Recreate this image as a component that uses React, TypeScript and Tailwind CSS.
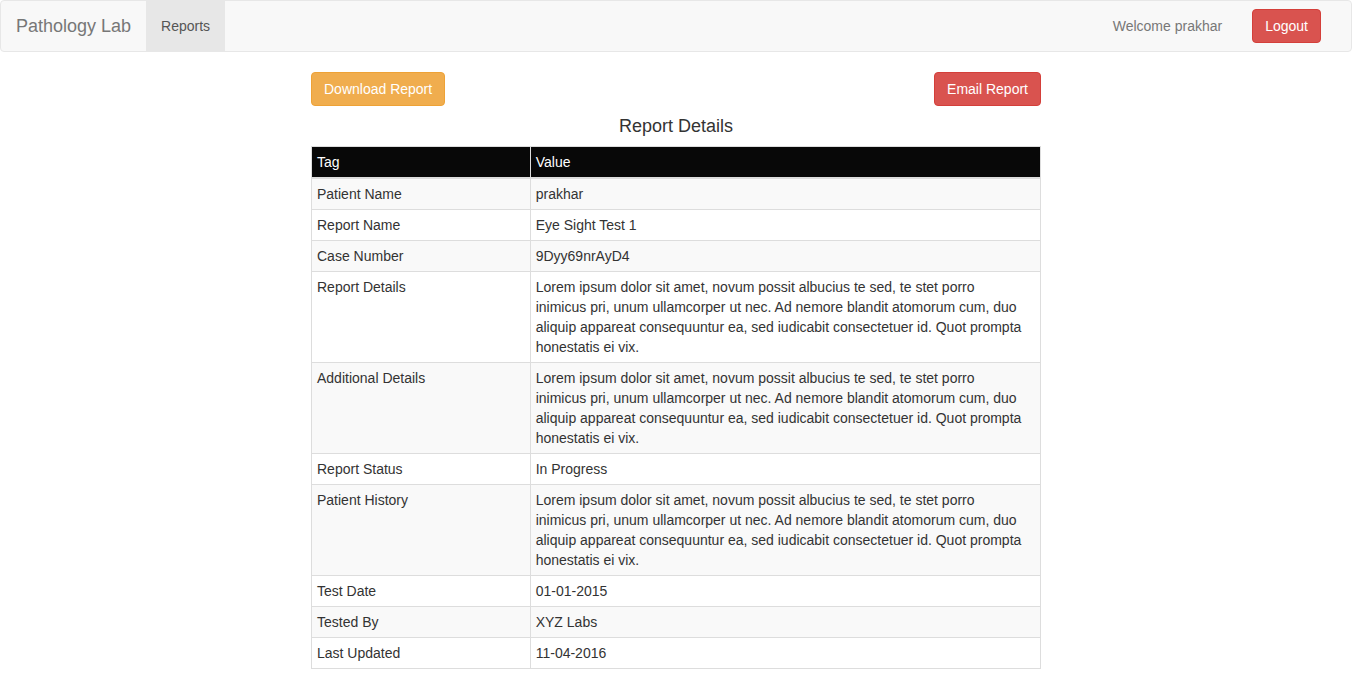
const lorem =
  'Lorem ipsum dolor sit amet, novum possit albucius te sed, te stet porro inimicus pri, unum ullamcorper ut nec. Ad nemore blandit atomorum cum, duo aliquip appareat consequuntur ea, sed iudicabit consectetuer id. Quot prompta honestatis ei vix.';

const rows: [string, string][] = [
  ['Patient Name', 'prakhar'],
  ['Report Name', 'Eye Sight Test 1'],
  ['Case Number', '9Dyy69nrAyD4'],
  ['Report Details', lorem],
  ['Additional Details', lorem],
  ['Report Status', 'In Progress'],
  ['Patient History', lorem],
  ['Test Date', '01-01-2015'],
  ['Tested By', 'XYZ Labs'],
  ['Last Updated', '11-04-2016'],
];

function Navbar() {
  return (
    <nav className="flex items-center justify-between rounded border border-[#e7e7e7] bg-[#f8f8f8]">
      <div className="flex items-center">
        <a href="#" className="px-[15px] py-[15px] text-lg leading-5 text-[#777777]">
          Pathology Lab
        </a>
        <a href="#reports" className="bg-[#e7e7e7] px-[15px] py-[15px] text-[#555555]">
          Reports
        </a>
      </div>
      <div className="flex items-center gap-[30px] pr-[30px]">
        <p className="text-[#777777]">Welcome prakhar</p>
        <button
          type="button"
          className="rounded border border-[#d43f3a] bg-[#d9534f] px-3 py-1.5 text-white"
        >
          Logout
        </button>
      </div>
    </nav>
  );
}

function ReportTable() {
  return (
    <table className="w-full border-collapse border border-[#dddddd]">
      <thead>
        <tr className="bg-[#080808] text-left text-white">
          <th className="w-[30%] border border-b-2 border-[#dddddd] p-[5px] font-normal">Tag</th>
          <th className="border border-b-2 border-[#dddddd] p-[5px] font-normal">Value</th>
        </tr>
      </thead>
      <tbody>
        {rows.map(([tag, value]) => (
          <tr key={tag} className="align-top odd:bg-[#f9f9f9]">
            <td className="border border-[#dddddd] p-[5px]">{tag}</td>
            <td className="border border-[#dddddd] py-[5px] pr-3.5 pl-[5px]">{value}</td>
          </tr>
        ))}
      </tbody>
    </table>
  );
}

export default function App() {
  return (
    <div className="bg-white font-['Liberation_Sans',Arial,sans-serif] text-sm leading-5 text-[#333333]">
      <Navbar />
      <main className="mx-auto mt-5 max-w-[730px] pb-5">
        <div className="flex justify-between">
          <button
            type="button"
            className="rounded border border-[#eea236] bg-[#f0ad4e] px-3 py-1.5 text-white"
          >
            Download Report
          </button>
          <button
            type="button"
            className="rounded border border-[#d43f3a] bg-[#d9534f] px-3 py-1.5 text-white"
          >
            Email Report
          </button>
        </div>
        <h4 className="my-2.5 text-center text-lg leading-5">Report Details</h4>
        <ReportTable />
      </main>
    </div>
  );
}
